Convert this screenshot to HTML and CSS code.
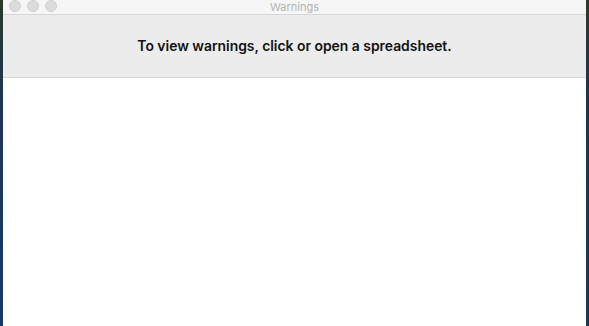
FILE: index.html
```html
<!DOCTYPE html>
<html>
<head>
<meta charset="utf-8">
<link rel="stylesheet" href="styles.css">
</head>
<body>
<div class="desktop">
  <div class="window">
    <div class="titlebar">
      <div class="lights">
        <span class="light"></span>
        <span class="light"></span>
        <span class="light"></span>
      </div>
      <div class="title">Warnings</div>
    </div>
    <div class="banner">To view warnings, click or open a spreadsheet.</div>
    <div class="content"></div>
  </div>
</div>
</body>
</html>
```

FILE: styles.css
```css
html, body {
  margin: 0;
  padding: 0;
  width: 589px;
  height: 326px;
  overflow: hidden;
}
.desktop {
  width: 589px;
  height: 326px;
  background: linear-gradient(180deg, #2b3a2a 0%, #1f3550 30%, #163a5e 100%);
  display: flex;
  padding: 0 3px 0 3px;
  box-sizing: border-box;
}
.window {
  flex: 1;
  display: flex;
  flex-direction: column;
  background: #ffffff;
  font-family: "Inter", "Roboto", "Liberation Sans", sans-serif;
}
.titlebar {
  height: 14px;
  background: #f6f6f6;
  border-bottom: 1px solid #d6d6d6;
  position: relative;
  display: flex;
  align-items: center;
  justify-content: center;
}
.lights {
  position: absolute;
  left: 6px;
  top: 0px;
  display: flex;
  gap: 6px;
}
.light {
  width: 12px;
  height: 12px;
  border-radius: 50%;
  background: #dcdcdc;
  border: 0.5px solid #d0d0d0;
  box-sizing: border-box;
}
.title {
  font-size: 11px;
  color: #b4b4b4;
  line-height: 14px;
}
.banner {
  height: 63px;
  background: #ececec;
  border-bottom: 1px solid #d4d4d4;
  display: flex;
  align-items: center;
  justify-content: center;
  font-size: 13.9px;
  font-weight: 600;
  color: #111111;
  padding-bottom: 1px;
  box-sizing: border-box;
}
.content {
  flex: 1;
  background: #ffffff;
}
```
